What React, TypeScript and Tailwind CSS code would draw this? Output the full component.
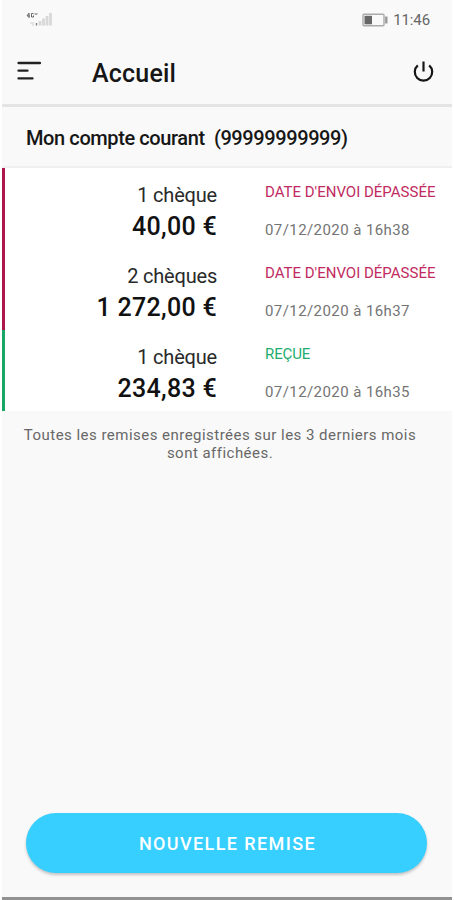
type Deposit = {
  count: string;
  amount: string;
  late: boolean;
  status: string;
  date: string;
};

const deposits: Deposit[] = [
  { count: "1 chèque", amount: "40,00 €", late: true, status: "DATE D'ENVOI DÉPASSÉE", date: "07/12/2020 à 16h38" },
  { count: "2 chèques", amount: "1 272,00 €", late: true, status: "DATE D'ENVOI DÉPASSÉE", date: "07/12/2020 à 16h37" },
  { count: "1 chèque", amount: "234,83 €", late: false, status: "REÇUE", date: "07/12/2020 à 16h35" },
];

function StatusBar() {
  return (
    <div className="flex h-9 items-start justify-between pt-2.5 pl-6 pr-[22px]">
      <svg width="27" height="18" viewBox="0 0 27 18" fill="none">
        <path d="M3 3L1 6H4M3 3V8M7.500 3.500H5.500V7H7.500V5.500M8.500 4H11.500" stroke="#666" strokeWidth="1" />
        <path d="M4 13H8M6 15H8" stroke="#ddd" strokeWidth="1.500" />
        <path d="M10.500 13V15.500" stroke="#888" strokeWidth="1.500" />
        <path d="M14 11V15.500M17.500 8.500V15.500M21 6V15.500M24.500 3V15.500" stroke="#d8d8d8" strokeWidth="2.800" />
      </svg>
      <div className="flex items-center gap-[5px]">
        <svg width="26" height="14" viewBox="0 0 26 14" fill="none">
          <rect x="1" y="1.200" width="21" height="11.500" rx="1" stroke="#aaa" strokeWidth="1.400" />
          <rect x="2.500" y="2.800" width="7.500" height="8.500" fill="#666" />
          <path d="M24.300 3.500V10.500" stroke="#999" strokeWidth="2.400" />
        </svg>
        <span className="text-[15px] leading-[20px] tracking-[-0.1px] text-[#666]">11:46</span>
      </div>
    </div>
  );
}

function Header() {
  return (
    <header className="flex h-[71px] items-center border-b-[3px] border-[#e4e4e4] pl-[15px] pr-[17px]">
      <svg width="24" height="22" viewBox="0 0 24 22" stroke="#222" strokeWidth="2.300" strokeLinecap="round">
        <path d="M1.500 4H23M1.500 11.700H10.500M1.500 19.400H15.500" />
      </svg>
      <h1 className="ml-[51px] pt-2 text-[25px] leading-8 font-medium tracking-[0.2px] text-[#161616]">Accueil</h1>
      <svg className="ml-auto mt-1" width="22" height="22" viewBox="0 0 22 22" fill="none" stroke="#161616" strokeWidth="2.200">
        <path d="M10.500 .5V10.500M4.800 4.400A8.700 8.700 0 1 0 16.200 4.400" />
      </svg>
    </header>
  );
}

function Row({ item }: { item: Deposit }) {
  return (
    <li className={`flex h-[81px] border-l-[3px] bg-white ${item.late ? "border-[#ad174c]" : "border-[#18a565]"}`}>
      <div className="w-[212px] pt-[15px] text-right">
        <p className="text-[20px] leading-6 tracking-[-0.2px] text-[#292929]">{item.count}</p>
        <p className="pt-1 text-[25px] leading-8 font-medium tracking-[0.3px] text-[#111]">{item.amount}</p>
      </div>
      <div className="ml-12 pt-[14px] whitespace-nowrap">
        <p className={`text-[15px] leading-5 ${item.late ? "text-[#c12b61]" : "tracking-[-0.1px] text-[#22ad70]"}`}>{item.status}</p>
        <p className="pt-[18px] text-[15px] leading-5 tracking-[0.42px] text-[#747474]">{item.date}</p>
      </div>
    </li>
  );
}

export default function App() {
  return (
    <div className="h-[900px] w-[454px] bg-white pr-0.5 pl-0.5 font-['Roboto',sans-serif]">
      <div className="flex h-full flex-col border-b-[3px] border-[#919191] bg-[#f9f9f9]">
        <StatusBar />
        <Header />
        <h2 className="flex h-[61px] items-center border-b-2 border-[#f0f0f0] pl-6 pt-0.5 text-[20px] font-medium tracking-[-0.4px] whitespace-pre text-[#161616]">
          {"Mon compte courant  (99999999999)"}
        </h2>
        <ul>
          {deposits.map((item) => (
            <Row key={item.date} item={item} />
          ))}
        </ul>
        <p className="pt-[15px] pr-3.5 text-center text-[15px] leading-[18px] tracking-[0.47px] text-[#686868]">
          Toutes les remises enregistrées sur les 3 derniers mois
          <br />
          sont affichées.
        </p>
        <button className="mt-auto mr-[25px] mb-[24px] ml-6 h-[60px] shrink-0 rounded-full bg-[#36cfff] pl-0.5 text-[18px] font-medium tracking-[1.4px] text-white shadow-[0_2px_3px_rgba(0,0,0,0.22)]">
          NOUVELLE REMISE
        </button>
      </div>
    </div>
  );
}
